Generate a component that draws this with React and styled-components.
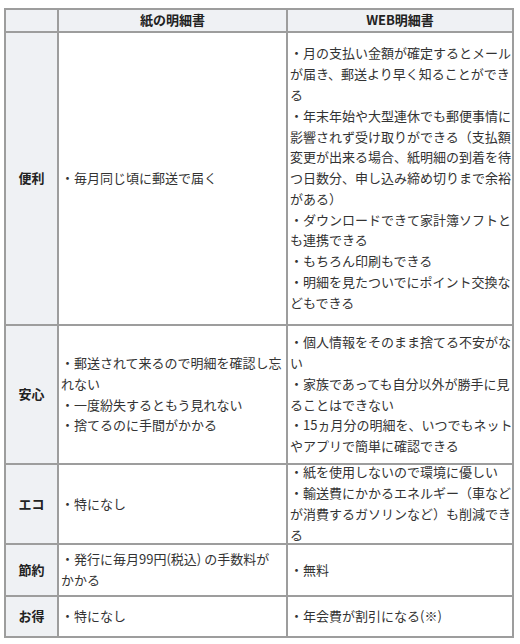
import React from "react";
import styled, { createGlobalStyle } from "styled-components";

const Global = createGlobalStyle`
  html, body { margin: 0; padding: 0; background: #fff; }
  body { font-family: "Noto Sans CJK JP", "Noto Sans", sans-serif; }
`;

const Table = styled.table`
  margin: 8px 0 0 4px;
  width: 508px;
  table-layout: fixed;
  border-collapse: collapse;
  border: 2px solid #9d9d9d;
  font-size: 13px;
  line-height: 20.8px;
  color: #333;
`;

const Col = styled.col`
  width: ${(p) => p.$w}px;
`;

const Row = styled.tr`
  height: ${(p) => p.$h}px;
`;

const HeadCell = styled.th`
  border: 2px solid #9d9d9d;
  background: #eff1f4;
  font-weight: bold;
  color: #222;
  text-align: center;
  vertical-align: middle;
  padding: 0 2px;
`;

const RowHead = styled.th`
  border: 2px solid #9d9d9d;
  background: #eff1f4;
  font-weight: bold;
  color: #222;
  text-align: center;
  vertical-align: middle;
  padding: 0 2px;
`;

const Cell = styled.td`
  border: 2px solid #9d9d9d;
  background: #fff;
  text-align: left;
  vertical-align: middle;
  padding: 0 1px 0 2px;
  overflow: visible;
`;

const Block = styled.div`
  margin: ${(p) => (p.$tight ? "-3px 0" : "0")};
`;

const Item = styled.div`
  margin: 0;
  white-space: nowrap;
`;

const rows = [
  {
    label: "便利",
    h: 293,
    paper: [["・毎月同じ頃に郵送で届く"]],
    web: [
      ["・月の支払い金額が確定するとメール", "が届き、郵送より早く知ることができ", "る"],
      [
        "・年末年始や大型連休でも郵便事情に",
        "影響されず受け取りができる（支払額",
        "変更が出来る場合、紙明細の到着を待",
        "つ日数分、申し込み締め切りまで余裕",
        "がある）",
      ],
      ["・ダウンロードできて家計簿ソフトと", "も連携できる"],
      ["・もちろん印刷もできる"],
      ["・明細を見たついでにポイント交換な", "どもできる"],
    ],
  },
  {
    label: "安心",
    h: 139,
    paper: [
      ["・郵送されて来るので明細を確認し忘", "れない"],
      ["・一度紛失するともう見れない"],
      ["・捨てるのに手間がかかる"],
    ],
    web: [
      ["・個人情報をそのまま捨てる不安がな", "い"],
      ["・家族であっても自分以外が勝手に見", "ることはできない"],
      ["・15ヵ月分の明細を、いつでもネット", "やアプリで簡単に確認できる"],
    ],
  },
  {
    label: "エコ",
    h: 80,
    tight: true,
    paper: [["・特になし"]],
    web: [
      ["・紙を使用しないので環境に優しい"],
      ["・輸送費にかかるエネルギー（車など", "が消費するガソリンなど）も削減でき", "る"],
    ],
  },
  {
    label: "節約",
    h: 52,
    paper: [["・発行に毎月99円(税込) の手数料が", "かかる"]],
    web: [["・無料"]],
  },
  {
    label: "お得",
    h: 41,
    paper: [["・特になし"]],
    web: [["・年会費が割引になる(※)"]],
  },
];

function Lines({ items, tight }) {
  return (
    <Block $tight={tight}>
      {items.map((lines, i) => (
        <Item key={i}>
          {lines.map((l, j) => (
            <React.Fragment key={j}>
              {j > 0 && <br />}
              {l}
            </React.Fragment>
          ))}
        </Item>
      ))}
    </Block>
  );
}

export default function App() {
  return (
    <>
      <Global />
      <Table>
        <colgroup>
          <Col $w={53} />
          <Col $w={229} />
          <Col $w={226} />
        </colgroup>
        <thead>
          <Row $h={23}>
            <HeadCell />
            <HeadCell>紙の明細書</HeadCell>
            <HeadCell>WEB明細書</HeadCell>
          </Row>
        </thead>
        <tbody>
          {rows.map((r) => (
            <Row key={r.label} $h={r.h}>
              <RowHead>{r.label}</RowHead>
              <Cell>
                <Lines items={r.paper} />
              </Cell>
              <Cell>
                <Lines items={r.web} tight={r.tight} />
              </Cell>
            </Row>
          ))}
        </tbody>
      </Table>
    </>
  );
}
